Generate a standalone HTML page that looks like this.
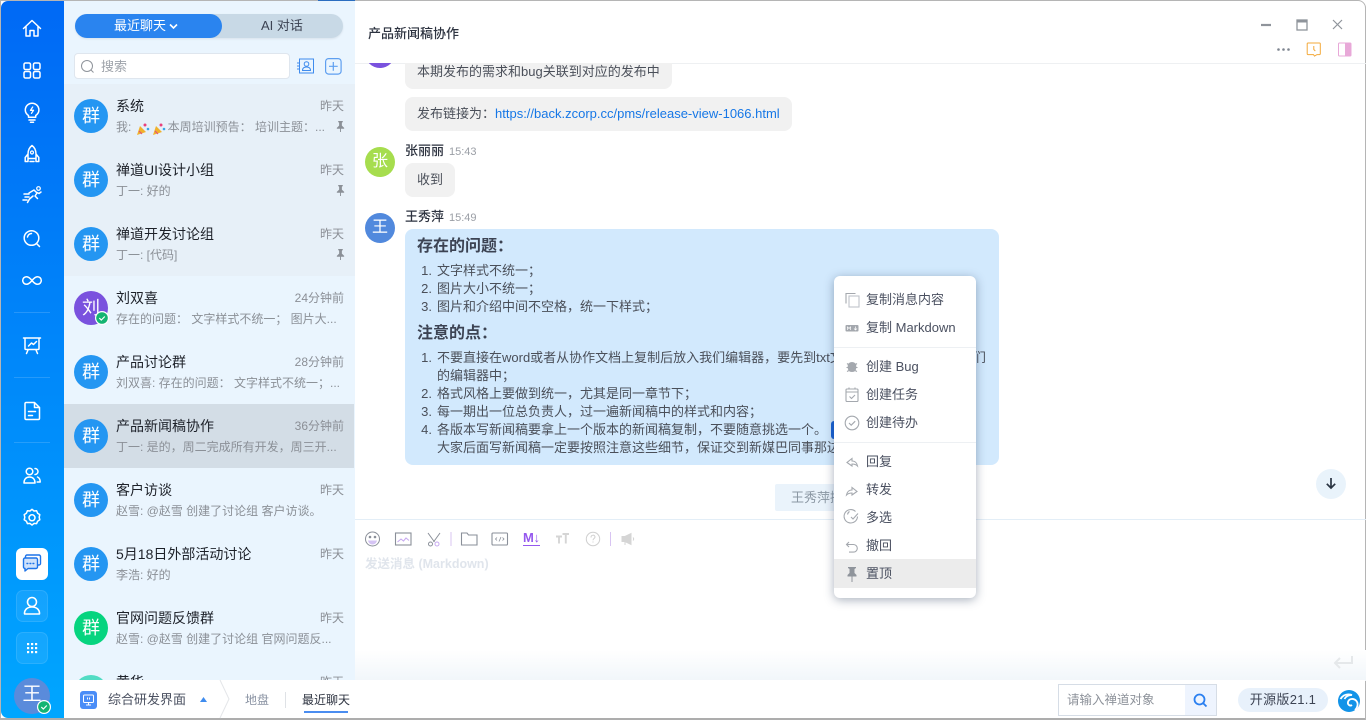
<!DOCTYPE html>
<html lang="zh"><head><meta charset="utf-8"><title>产品新闻稿协作</title>
<style>
*{box-sizing:border-box;margin:0;padding:0}
html,body{width:1366px;height:720px;overflow:hidden;background:#fff}
body{font-family:"Liberation Sans","Noto Sans CJK SC",sans-serif;color:#3c4353;position:relative}
.a{position:absolute;white-space:nowrap}
svg{position:absolute;overflow:visible}
#side{left:1px;top:1px;width:63px;height:717px;background:linear-gradient(180deg,#0069f5 0%,#00a6ff 100%);border-radius:7px 0 0 7px}
#list{left:64px;top:1px;width:291px;height:680px;background:#eaf5fe;overflow:hidden}
.row{position:absolute;left:0;width:291px;height:64px}
.av{position:absolute;left:10px;top:15px;width:34px;height:34px;border-radius:50%;background:#2496f2;color:#fff;font-size:18px;line-height:34px;text-align:center;font-weight:400}
.t{position:absolute;left:52px;top:12px;font-size:14px;line-height:20px;color:#1d2129;white-space:nowrap}
.tm{position:absolute;right:11px;top:13px;font-size:12px;line-height:18px;color:#8b8f96;white-space:nowrap}
.p{position:absolute;left:52px;top:34px;font-size:12px;line-height:18px;color:#8b9097;white-space:nowrap}
.pin{position:absolute;left:272px;top:37px;width:9px;height:11px}
.tile{position:absolute;left:15px;width:32px;height:32px;border-radius:7px;background:rgba(255,255,255,.08);border:1px solid rgba(255,255,255,.1)}
.bub{position:absolute;left:405px;background:#f1f1f1;border-radius:8px;font-size:13px;line-height:20px;padding:7px 12px;white-space:nowrap;color:#4a4f59}
.nm{position:absolute;left:405px;font-size:13px;line-height:16px;font-weight:500;color:#2d3340}
.ts{position:absolute;left:449px;font-size:11px;line-height:16px;color:#9a9ea5}
.cav{position:absolute;left:365px;width:30px;height:30px;border-radius:50%;color:#fff;font-size:16px;line-height:30px;text-align:center}
#md{left:405px;top:229px;width:594px;height:236px;background:#d2e9fd;border-radius:8px;font-size:13px;color:#4a4f59}
#md h4{position:absolute;left:12px;font-size:16px;line-height:20px;font-weight:700;color:#3c4353}
#md div{position:absolute;left:12px;line-height:18px;white-space:nowrap}
#md div b{display:inline-block;width:20px;text-align:right;padding-right:2px;font-weight:400;margin-left:-3px;margin-right:3px}
#menu{left:834px;top:276px;width:142px;height:322px;background:#fff;border-radius:6px;box-shadow:0 2px 10px rgba(40,60,90,.4)}
.mi{position:absolute;left:32px;font-size:13px;line-height:18px;color:#4a5060;white-space:nowrap}
.hr{position:absolute;left:0;width:142px;height:1px;background:#edf0f3}
</style></head><body>
<div class="a" style="left:0;top:0;width:1366px;height:1px;background:#b5b5b5"></div>
<div class="a" style="left:318px;top:0;width:37px;height:1px;background:#2a6dc0"></div>
<div class="a" style="left:0;top:0;width:1px;height:720px;background:#b5b5b5"></div>
<div class="a" style="left:0;top:718px;width:1366px;height:2px;background:#adadad"></div>
<div class="a" style="left:1365px;top:0;width:1px;height:720px;background:#b5b5b5"></div>

<div class="a" id="side"></div>
<svg style="left:0;top:0" width="64" height="720" fill="none" stroke="#fff" stroke-width="1.500" stroke-linejoin="round" stroke-linecap="round">
<path d="M23.500 28.500 32 20.500l8.500 8M26 26.500V36h4v-5.500h4V36h4v-9.500"/>
<rect x="24" y="63" width="6.500" height="6.500" rx="1.500"/><rect x="33.500" y="63" width="6.500" height="6.500" rx="1.500"/><rect x="24" y="71.500" width="6.500" height="6.500" rx="1.500"/><rect x="33.500" y="71.500" width="6.500" height="6.500" rx="1.500"/>
<path d="M28.500 115.500c-2-1.400-3.200-3.300-3.200-5.500a6.800 6.800 0 0 1 13.600 0c0 2.200-1.200 4.100-3.200 5.500v1.800h-7.200zM29 120h6M30.500 122.300h3"/><path d="M32.700 107l-2.200 3.300h3l-2 3" stroke-width="1.300"/>
<path d="M32 145.500c-2.700 2-4 5-4 8.500v4.500h8V154c0-3.500-1.300-6.500-4-8.500zM28 154l-2.800 3.500v4h2.800v-3M36 154l2.800 3.500v4H36v-3M30 161.500h4"/><circle cx="32" cy="152.500" r="1.500" stroke-width="1.200"/>
<path d="M29 193l5-3 3 3-2 3 2.500 2.500M33 196l-3.500 3-2 3.500M36 192l3 1.500 2-1.500M24 194h5M25 197h4M23 200h4" stroke-width="1.500"/><circle cx="38.500" cy="188.500" r="1.800" stroke-width="1.200"/>
<circle cx="31.500" cy="238" r="7.300"/><path d="M27.500 237a4.500 4.500 0 0 1 4-3.500M36.500 243.500l3 3"/>
<path d="M32 280.500c-2-2.500-3.500-3.800-5.500-3.800a3.800 3.800 0 0 0 0 7.600c2 0 3.500-1.300 5.500-3.800s3.500-3.800 5.500-3.800a3.800 3.800 0 0 1 0 7.600c-2 0-3.500-1.300-5.500-3.800z"/>
<path d="M23.500 338h17M25 338v10.500a1 1 0 0 0 1 1h12a1 1 0 0 0 1-1V338M28 350l-1.500 3.500M36 350l1.500 3.500M28.500 346l3-3 2 1.500 3-3"/>
<path d="M26 402.500h8.500l5 5v10.800a1.200 1.200 0 0 1-1.200 1.200H26.200a1.200 1.200 0 0 1-1.200-1.200v-14.600a1.200 1.200 0 0 1 1-1.200zM34.500 402.500v5h5M28.500 411.500h7M28.500 415.500h4"/>
<circle cx="29.500" cy="471.500" r="3.300"/><path d="M24 483c0-3.800 2-6 5.500-6s5.500 2.200 5.500 6zM35 468.500a3 3 0 0 1 0 6M37.500 477c1.800.8 2.700 2.500 2.700 5h-3"/>
<path d="M32 509.300l2 1.700 2.600-.2 1 2.400 2.200 1.400-.6 2.600.6 2.600-2.200 1.400-1 2.400-2.600-.2-2 1.700-2-1.700-2.600.2-1-2.400-2.200-1.400.6-2.600-.6-2.600 2.200-1.400 1-2.400 2.600.2z"/><circle cx="32" cy="517.800" r="3"/>
</svg>
<div class="a" style="left:14px;top:312px;width:36px;height:1px;background:rgba(255,255,255,.15)"></div>
<div class="a" style="left:14px;top:377px;width:36px;height:1px;background:rgba(255,255,255,.15)"></div>
<div class="a" style="left:14px;top:442px;width:36px;height:1px;background:rgba(255,255,255,.15)"></div>
<div class="a" style="left:16px;top:548px;width:32px;height:32px;border-radius:6px;background:#fff"></div>
<svg style="left:16px;top:548px" width="32" height="32" fill="none" stroke="#1f74e8" stroke-width="1.400" stroke-linejoin="round"><path d="M9.500 9.500V8.500a1.500 1.500 0 0 1 1.500-1.500h12a1.500 1.500 0 0 1 1.500 1.500v7a1.500 1.500 0 0 1-1.500 1.500h-1"/><path d="M9 10h11a1.500 1.500 0 0 1 1.500 1.500V19a1.500 1.500 0 0 1-1.500 1.500h-8L9 23v-2.500a1.500 1.500 0 0 1-1.500-1.500v-7.500A1.500 1.500 0 0 1 9 10z" fill="#cfe2fb"/><path d="M11 15.500h.8M14 15.500h.8M17 15.500h.8" stroke-linecap="round"/></svg>
<div class="tile" style="left:16px;top:590px"></div>
<svg style="left:16px;top:590px" width="32" height="32" fill="none" stroke="#fff" stroke-width="1.600"><circle cx="16" cy="12" r="4.500"/><path d="M8.500 23.500c0-4 3-6.500 7.500-6.500s7.500 2.500 7.500 6.500a.5.500 0 0 1-.5.500H9a.5.500 0 0 1-.5-.5z"/></svg>
<div class="tile" style="left:16px;top:632px"></div>
<svg style="left:16px;top:632px" width="32" height="32" fill="#fff"><rect x="11" y="11" width="2.200" height="2.200"/><rect x="15" y="11" width="2.200" height="2.200"/><rect x="19" y="11" width="2.200" height="2.200"/><rect x="11" y="15" width="2.200" height="2.200"/><rect x="15" y="15" width="2.200" height="2.200"/><rect x="19" y="15" width="2.200" height="2.200"/><rect x="11" y="19" width="2.200" height="2.200"/><rect x="15" y="19" width="2.200" height="2.200"/><rect x="19" y="19" width="2.200" height="2.200"/></svg>
<div class="a" style="left:14px;top:678px;width:36px;height:36px;border-radius:50%;background:#5a8bdb;color:#fff;font-size:19px;line-height:34px;text-align:center">王</div>
<svg style="left:37px;top:700px" width="14" height="14"><circle cx="7" cy="7" r="7" fill="#fff"/><circle cx="7" cy="7" r="5.800" fill="#14b472"/><path d="M4.300 7l2 2 3.500-3.500" fill="none" stroke="#fff" stroke-width="1.200"/></svg>

<div class="a" id="list">
<div class="a" style="left:11px;top:13px;width:268px;height:24px;border-radius:12px;background:#c8d9e6;color:#3c4353;font-size:13px;line-height:24px;padding-left:186px;box-shadow:0 1px 2px rgba(0,0,0,.08)">AI 对话</div>
<div class="a" style="left:11px;top:13px;width:147px;height:24px;border-radius:12px;background:#2a84ef;color:#fff;font-size:13px;line-height:24px;padding-left:39px">最近聊天</div>
<svg style="left:105px;top:22px" width="10" height="8" fill="none" stroke="#fff" stroke-width="1.600"><path d="M1 1.500l3.500 3.500L8 1.500"/></svg>
<div class="a" style="left:10px;top:52px;width:216px;height:26px;background:#fff;border:1px solid #dfe6ee;border-radius:4px;font-size:13px;line-height:25px;color:#9ea3aa;padding-left:26px">搜索</div>
<svg style="left:17px;top:59px" width="14" height="14" fill="none" stroke="#8f949b" stroke-width="1"><circle cx="6" cy="6" r="5.500"/><path d="M10 10l2.500 2.500"/></svg>
<svg style="left:233px;top:57px" width="18" height="16" fill="none" stroke="#3f8cee" stroke-width="1"><rect x="2.500" y="1" width="14" height="14"/><circle cx="9.500" cy="6" r="2.300"/><path d="M5.500 12.500c0-2.500 1.500-3.500 4-3.500s4 1 4 3.500zM0 5h2M0 8h2M0 11h2"/></svg>
<svg style="left:261px;top:57px" width="17" height="17" fill="none" stroke="#5e9ff0" stroke-width="1.200"><rect x=".6" y=".6" width="15.500" height="15.500" rx="3"/><path d="M8.300 4v8.700M4 8.300h8.700"/></svg>

<div class="a" style="left:0;top:83px;width:291px;height:192px;background:#e7f0f8"></div>

<div class="row" style="top:83px"><div class="av">群</div><div class="t">系统</div><div class="tm">昨天</div><div class="p">我: <span style="display:inline-block;width:33px"></span>本周培训预告： 培训主题：...</div>
<svg style="left:73px;top:38px" width="30" height="14"><path d="M0 13l3-9 6 6z" fill="#f0b12c"/><path d="M2 9l3 3" stroke="#e24a7c"/><circle cx="8" cy="3" r="1.500" fill="#e9407c"/><circle cx="11" cy="7" r="1.300" fill="#38a6e8"/><path d="M16 13l3-9 6 6z" fill="#f0b12c"/><path d="M18 9l3 3" stroke="#e24a7c"/><circle cx="24" cy="3" r="1.500" fill="#e9407c"/><circle cx="27" cy="7" r="1.300" fill="#38a6e8"/></svg>
<svg class="pin" viewBox="0 0 9 12" fill="#8b9097"><path d="M2 0h5v1L6 2v3l2.500 2.500V8.500H5V12H4V8.500H.5V7.500L3 5V2L2 1z"/></svg></div>
<div class="row" style="top:147px"><div class="av">群</div><div class="t">禅道UI设计小组</div><div class="tm">昨天</div><div class="p">丁一: 好的</div><svg class="pin" viewBox="0 0 9 12" fill="#8b9097"><path d="M2 0h5v1L6 2v3l2.500 2.500V8.500H5V12H4V8.500H.5V7.500L3 5V2L2 1z"/></svg></div>
<div class="row" style="top:211px"><div class="av">群</div><div class="t">禅道开发讨论组</div><div class="tm">昨天</div><div class="p">丁一: [代码]</div><svg class="pin" viewBox="0 0 9 12" fill="#8b9097"><path d="M2 0h5v1L6 2v3l2.500 2.500V8.500H5V12H4V8.500H.5V7.500L3 5V2L2 1z"/></svg></div>
<div class="row" style="top:275px"><div class="av" style="background:#7a52de">刘</div><svg style="left:31px;top:35px" width="14" height="14"><circle cx="7" cy="7" r="7" fill="#fff"/><circle cx="7" cy="7" r="5.800" fill="#14b472"/><path d="M4.300 7l2 2 3.500-3.500" fill="none" stroke="#fff" stroke-width="1.200"/></svg><div class="t">刘双喜</div><div class="tm">24分钟前</div><div class="p">存在的问题： 文字样式不统一； 图片大...</div></div>
<div class="row" style="top:339px"><div class="av">群</div><div class="t">产品讨论群</div><div class="tm">28分钟前</div><div class="p">刘双喜: 存在的问题： 文字样式不统一；...</div></div>
<div class="row" style="top:403px;background:#d3dde6;width:290px"><div class="av">群</div><div class="t">产品新闻稿协作</div><div class="tm" style="right:10px">36分钟前</div><div class="p">丁一: 是的，周二完成所有开发，周三开...</div></div>
<div class="row" style="top:467px"><div class="av">群</div><div class="t">客户访谈</div><div class="tm">昨天</div><div class="p">赵雪: @赵雪 创建了讨论组 客户访谈。</div></div>
<div class="row" style="top:531px"><div class="av">群</div><div class="t">5月18日外部活动讨论</div><div class="tm">昨天</div><div class="p">李浩: 好的</div></div>
<div class="row" style="top:595px"><div class="av" style="background:#06d47f">群</div><div class="t">官网问题反馈群</div><div class="tm">昨天</div><div class="p">赵雪: @赵雪 创建了讨论组 官网问题反...</div></div>
<div class="row" style="top:659px"><div class="av" style="background:#52dcc4">黄</div><div class="t">黄华</div><div class="tm">昨天</div></div>
</div>

<!-- header -->
<div class="a" style="left:368px;top:25px;font-size:13px;line-height:18px;font-weight:500;color:#2d3340">产品新闻稿协作</div>
<div class="a" style="left:355px;top:63px;width:1011px;height:1px;background:#eef0f2"></div>
<svg style="left:1250px;top:15px" width="110" height="45" fill="none">
<path d="M11 10h10" stroke="#8f949b" stroke-width="2.200"/>
<rect x="47" y="5" width="10" height="10" stroke="#8f949b" stroke-width="1.300"/><path d="M47 6.500h10" stroke="#8f949b" stroke-width="2"/>
<path d="M83 5l9 9M92 5l-9 9" stroke="#8f949b" stroke-width="1.200"/>
<circle cx="28.500" cy="34.500" r="1.300" fill="#7e8590"/><circle cx="33.500" cy="34.500" r="1.300" fill="#7e8590"/><circle cx="38.500" cy="34.500" r="1.300" fill="#7e8590"/>
<path d="M58 28h11.500a.8.800 0 0 1 .8.800v10a.8.800 0 0 1-.8.800H67l-2.500 1.500-1-1.500H58a.8.800 0 0 1-.8-.8v-10a.8.800 0 0 1 .8-.8z" stroke="#f3a93a" stroke-width="1"/><path d="M63.800 31v3.500l1.500 1.500" stroke="#f3a93a"/>
<rect x="88.500" y="28" width="12.500" height="13" rx="1" stroke="#e8a8d8"/><rect x="95" y="28.500" width="5.500" height="12" fill="#e8a8d8"/>
</svg>

<!-- messages -->
<div class="cav" style="top:38px;background:#7a52de;height:30px;clip-path:inset(25px 0 0 0)"></div>
<div class="bub" style="top:55px;width:267px;height:34px;border-radius:0 0 8px 8px;clip-path:inset(8px 0 0 0);padding-top:7px">本期发布的需求和bug关联到对应的发布中</div>
<div class="bub" style="top:97px;width:387px;height:34px;">发布链接为：<span style="color:#1677e6">https://back.zcorp.cc/pms/release-view-1066.html</span></div>
<div class="cav" style="top:147px;background:#a6dd4e">张</div>
<div class="nm" style="top:143px">张丽丽</div><div class="ts" style="top:144px">15:43</div>
<div class="bub" style="top:163px;width:50px;height:34px">收到</div>
<div class="cav" style="top:213px;background:#5189dd">王</div>
<div class="nm" style="top:209px">王秀萍</div><div class="ts" style="top:210px">15:49</div>
<div class="a" id="md">
<h4 style="top:8px">存在的问题：</h4>
<div style="top:33px"><b>1.</b>文字样式不统一；</div>
<div style="top:51px"><b>2.</b>图片大小不统一；</div>
<div style="top:69px"><b>3.</b>图片和介绍中间不空格，统一下样式；</div>
<h4 style="top:95px">注意的点：</h4>
<div style="top:120px"><b>1.</b>不要直接在word或者从协作文档上复制后放入我们编辑器，要先到txt文档上去除格式后放入我们</div>
<div style="top:138px;left:32px">的编辑器中；</div>
<div style="top:156px"><b>2.</b>格式风格上要做到统一，尤其是同一章节下；</div>
<div style="top:174px"><b>3.</b>每一期出一位总负责人，过一遍新闻稿中的样式和内容；</div>
<div style="top:192px"><b>4.</b>各版本写新闻稿要拿上一个版本的新闻稿复制，不要随意挑选一个。</div>
<div style="top:192px;left:426px;width:12px;height:18px;background:#1762d8;border-radius:3px"></div>
<div style="top:210px;left:32px">大家后面写新闻稿一定要按照注意这些细节，保证交到新媒巴同事那边</div>
</div>
<div class="a" style="left:775px;top:484px;width:100px;height:27px;background:#eaf3fb;border-radius:2px;font-size:13px;line-height:27px;padding-left:16px;color:#8b97a3;overflow:hidden">王秀萍撤回</div>
<div class="a" style="left:1316px;top:469px;width:30px;height:30px;border-radius:50%;background:#e9f3fb"></div>
<svg style="left:1316px;top:469px" width="30" height="30" fill="none" stroke="#2a3442" stroke-width="1.700"><path d="M15 9v10M10.800 14.800l4.200 4.200 4.200-4.200"/></svg>

<!-- input -->
<div class="a" style="left:355px;top:519px;width:1011px;height:1px;background:#e3eef7"></div>
<svg style="left:355px;top:520px" width="300" height="40" fill="none" stroke="#8a8f99" stroke-width="1">
<circle cx="17.500" cy="19" r="7"/><circle cx="15" cy="17" r=".8" fill="#8a8f99"/><circle cx="20" cy="17" r=".8" fill="#8a8f99"/><path d="M13 20.500h9c-.5 2.500-2.300 4-4.500 4s-4-1.500-4.500-4z" fill="#d5c4f4" stroke="none"/>
<rect x="40.500" y="13" width="15.500" height="12" stroke-width="1.100"/><path d="M42.500 22l3.500-3 2.500 2 2.500-3 3 2.500" stroke="#c6a8f0"/>
<path d="M73 13l6.500 9M85 13l-6.500 9"/><circle cx="75.500" cy="24" r="2"/><circle cx="82" cy="24" r="2" stroke="#c6a8f0"/>
<path d="M96 12v14" stroke="#d8c4f2"/>
<path d="M106.500 13h5.500l1.500 2h8.500v10h-15.500z" stroke-width="1.100"/>
<rect x="137" y="13" width="15.500" height="12" rx="1" stroke-width="1.100"/><path d="M142 17.500l-1.500 1.500 1.500 1.500M147.500 17.500l1.500 1.500-1.500 1.500M146 17l-2 4.500" stroke-width=".8"/>
<path d="M201 16.500h6M204 16.500v7M207.500 14h6.500M210.800 14v9.500" stroke="#d5d5d5" stroke-width="1.900"/>
<circle cx="238" cy="19" r="6.700" stroke="#cfcfcf"/><path d="M236 17.500c0-3 4-3 4-.5 0 1.500-2 1.500-2 3.200M238 21.500v1" stroke="#cfcfcf"/>
<path d="M255.500 12v14" stroke="#d8c4f2"/>
<path d="M267 16.500h3l6-3v11l-6-3h-3zM278 17.500a2 2 0 0 1 0 3M270 22v3" stroke="#d5d5d5" fill="#d5d5d5"/>
</svg>
<div class="a" style="left:523px;top:531px;font-size:13px;line-height:14px;font-weight:700;color:#9558ee;border-bottom:1px solid #9558ee;letter-spacing:-.3px">M↓</div>
<div class="a" style="left:365px;top:556px;font-size:12.500px;line-height:17px;font-weight:700;color:#e0e5ec">发送消息 (Markdown)</div>
<div class="a" style="left:355px;top:650px;width:1011px;height:31px;background:linear-gradient(180deg,#fff 0%,#f1f6fa 100%)"></div>
<svg style="left:1333px;top:655px" width="20" height="16" fill="none" stroke="#e5e8ea" stroke-width="2"><path d="M19 1v7H2M7 3L2 8l5 5"/></svg>

<!-- menu -->
<div class="a" id="menu">
<div class="mi" style="top:15px">复制消息内容</div><div class="mi" style="top:43px">复制 Markdown</div>
<div class="hr" style="top:71px"></div>
<div class="mi" style="top:82px">创建 Bug</div><div class="mi" style="top:110px">创建任务</div><div class="mi" style="top:138px">创建待办</div>
<div class="hr" style="top:166px"></div>
<div class="mi" style="top:177px">回复</div><div class="mi" style="top:205px">转发</div><div class="mi" style="top:233px">多选</div><div class="mi" style="top:261px">撤回</div>
<div class="a" style="left:0;top:283px;width:142px;height:29px;background:#ececec"></div>
<div class="mi" style="top:289px">置顶</div>
<svg style="left:0;top:0" width="32" height="310" fill="none" stroke="#a4a8ae" stroke-width="1.100">
<path d="M12 27.500V17.500h9.500"/><rect x="15" y="20" width="10" height="11" stroke="#c0c4ca"/>
<rect x="11.500" y="49" width="13" height="6.500" fill="#a4a8ae" stroke="none" rx="1"/><path d="M13.500 54v-3l1.500 1.500 1.500-1.500v3M21.500 50.500v3M20 52.500l1.500 1.500 1.500-1.500" stroke="#fff" stroke-width=".7"/>
<path d="M18 86.500c-2.800 0-3.800 2-3.800 4.500s1 4.500 3.800 4.500 3.800-2 3.800-4.500-1-4.500-3.800-4.500zM13 87.500l2 1.500M23 87.500l-2 1.500M12.500 91.500h2M23.500 91.500h-2M13 95.500l2-1M23 95.500l-2-1" fill="#a4a8ae"/>
<rect x="12" y="113" width="12" height="12.500" rx="1"/><path d="M12 116h12M15 111.500v2M21 111.500v2M15.500 120.500l2 2 3.500-3.500"/>
<circle cx="18" cy="147" r="6.800"/><path d="M15 147l2.200 2.200 4-4"/>
<path d="M19 191l-5-3.500 5-4v2.500c3 0 5 2 5.500 5-1.500-1.500-3-2-5.500-2z" transform="translate(-1,-1)"/>
<path d="M17 219l5-3.500-5-4v2.500c-3 0-5 2-5.500 5 1.500-1.500 3-2 5.500-2z" transform="translate(1,0)"/>
<path d="M23.500 240.500a6.700 6.700 0 1 1-2-5M13.500 238.500a4.500 4.500 0 0 1 2-3"/><path d="M17 241l2 2 5-5.500"/>
<path d="M15 267l-2.500 2.500 2.500 2.500M13 269.500h6.500a3.800 3.800 0 0 1 0 7.600H15" transform="translate(0,-1)"/>
<path d="M14 291h8v1l-1.500 1v4l2 2v1.500h-4V306h-1v-5.500h-4V299l2-2v-4l-1.500-1z" fill="#8f949b" stroke="none"/>
</svg>
</div>

<!-- bottom bar -->
<div class="a" style="left:64px;top:680px;width:1301px;height:38px;background:#fff"></div>
<div class="a" style="left:80px;top:691px;width:17px;height:18px;background:#4a8df7;border-radius:3px"></div>
<svg style="left:80px;top:691px" width="17" height="18" fill="none" stroke="#fff" stroke-width="1"><rect x="3.500" y="4" width="10" height="7.500" rx="1"/><path d="M6 14h5M8.500 11.500V14M7.500 6.500v2M9.500 6.500v2"/></svg>
<div class="a" style="left:108px;top:690px;font-size:13px;line-height:20px;color:#4a5060">综合研发界面</div>
<svg style="left:200px;top:697px" width="7" height="5"><path d="M3.500 0L7 5H0z" fill="#3f8cee"/></svg>
<svg style="left:220px;top:680px" width="12" height="38" fill="none" stroke="#e4e6e9"><path d="M0 0l9 19-9 19"/></svg>
<div class="a" style="left:245px;top:690px;font-size:12px;line-height:20px;color:#8a93a3">地盘</div>
<div class="a" style="left:285px;top:692px;width:1px;height:16px;background:#dfe2e6"></div>
<div class="a" style="left:302px;top:690px;font-size:12px;line-height:20px;color:#2d3340">最近聊天</div>
<div class="a" style="left:304px;top:711px;width:44px;height:2px;background:#4a8df0"></div>
<div class="a" style="left:1058px;top:684px;width:159px;height:32px;border:1px solid #d6dde6;font-size:12.500px;line-height:30px;padding-left:8px;color:#8d929a">请输入禅道对象</div>
<div class="a" style="left:1185px;top:685px;width:31px;height:30px;background:#eef4fe"></div>
<svg style="left:1193px;top:693px" width="16" height="16" fill="none" stroke="#2a7ff0" stroke-width="1.800"><circle cx="6.500" cy="6.500" r="5"/><path d="M10.200 10.200l3.300 3.300"/></svg>
<div class="a" style="left:1238px;top:688px;width:90px;height:24px;border-radius:12px;background:#e8f1fb;font-size:13px;letter-spacing:.3px;line-height:24px;text-align:center;color:#3c4353">开源版21.1</div>
<svg style="left:1338px;top:690px" width="22" height="22" fill="none"><circle cx="11" cy="11" r="11" fill="#1293e8"/><path d="M2.500 9C5 5 9 3.500 14 5c-3 0-6 1-7.500 4M17 20c3-3 3.500-7 1-9.500-2.500-2.500-7-2-8 1.500-.7 2.500 2 4.500 4 3" stroke="#fff" stroke-width="1.800"/></svg>
<svg style="left:1358px;top:0" width="8" height="8"><path d="M0 0h8v8h-0V8A8 8 0 0 0 0 1z" fill="#fff"/><path d="M0 .5A7.500 7.500 0 0 1 7.500 8" fill="none" stroke="#b5b5b5"/></svg>
</body></html>
